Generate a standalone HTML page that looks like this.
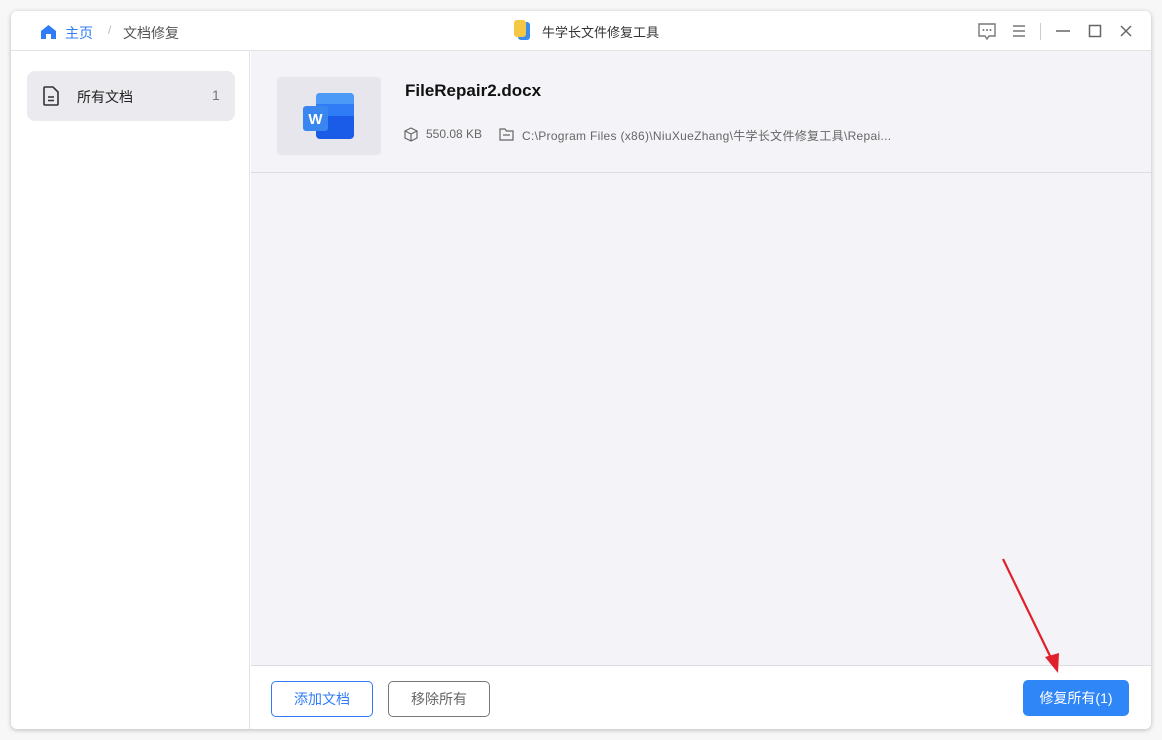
<!DOCTYPE html>
<html><head><meta charset="utf-8"><style>
*{margin:0;padding:0;box-sizing:border-box}
body{width:1162px;height:740px;background:#f7f7f7;font-family:"Liberation Sans","Noto Sans CJK SC",sans-serif;position:relative;overflow:hidden}
.win{position:absolute;left:11px;top:11px;width:1140px;height:718px;background:#fff;border-radius:6px;box-shadow:0 1px 5px rgba(0,0,0,.25);overflow:hidden}
.title{position:absolute;left:0;top:0;width:100%;height:40px;border-bottom:1px solid #e3e3e6}
.side{position:absolute;left:0;top:40px;width:239px;bottom:0;border-right:1px solid #e3e3e6;background:#fff}
.main{position:absolute;left:240px;top:40px;right:0;height:614px;background:#f4f4f8}
.foot{position:absolute;left:240px;top:654px;right:0;bottom:0;border-top:1px solid #dcdce0;background:#fff}
.t{position:absolute;white-space:nowrap}
</style></head><body>
<div class="win">
 <div class="title">
  <svg class="t" style="left:29px;top:13px" width="17" height="16" viewBox="0 0 17 16"><path d="M8.5 1L1 7v8h5v-5h5v5h5V7z" fill="#2f7cf6"/></svg>
  <span class="t" style="left:54px;top:12px;font-size:14px;color:#2f7cf6">主页</span>
  <span class="t" style="left:97px;top:12px;font-size:12px;color:#bbb">/</span>
  <span class="t" style="left:112px;top:12px;font-size:14px;color:#555">文档修复</span>
  <svg class="t" style="left:502px;top:8px" width="18" height="22" viewBox="0 0 18 22"><rect x="5" y="3" width="12" height="18" rx="3" fill="#3a8cf0"/><rect x="1" y="1" width="12" height="17" rx="3" fill="#f6c745"/></svg>
  <span class="t" style="left:531px;top:11px;font-size:13px;color:#333">牛学长文件修复工具</span>
  <svg class="t" style="left:966px;top:11px" width="20" height="19" viewBox="0 0 20 19"><path d="M2 2h16v12h-6l-2 3-2-3H2z" fill="none" stroke="#777" stroke-width="1.4"/><circle cx="6.5" cy="8" r="1" fill="#777"/><circle cx="10" cy="8" r="1" fill="#777"/><circle cx="13.5" cy="8" r="1" fill="#777"/></svg>
  <svg class="t" style="left:1000px;top:13px" width="16" height="14" viewBox="0 0 16 14"><path d="M2 2h12M2 7h12M2 12h12" stroke="#777" stroke-width="1.4"/></svg>
  <div class="t" style="left:1029px;top:12px;width:1px;height:17px;background:#ccc"></div>
  <svg class="t" style="left:1044px;top:13px" width="16" height="14"><path d="M1 7h14" stroke="#666" stroke-width="1.6"/></svg>
  <svg class="t" style="left:1077px;top:13px" width="14" height="14"><rect x="1.5" y="1.5" width="11" height="11" fill="none" stroke="#666" stroke-width="1.5"/></svg>
  <svg class="t" style="left:1108px;top:13px" width="14" height="14"><path d="M2 2l10 10M12 2L2 12" stroke="#666" stroke-width="1.5"/></svg>
 </div>
 <div class="side">
  <div class="t" style="left:16px;top:20px;width:208px;height:50px;background:#ebebef;border-radius:8px"></div>
  <svg class="t" style="left:32px;top:35px" width="16" height="20" viewBox="0 0 16 20"><path d="M2 1h8l5 5v12a1 1 0 0 1-1 1H2a1 1 0 0 1-1-1V2a1 1 0 0 1 1-1z" fill="none" stroke="#333" stroke-width="1.6"/><path d="M5 11h6M5 14.5h6" stroke="#333" stroke-width="1.6"/></svg>
  <span class="t" style="left:66px;top:36px;font-size:14px;color:#222">所有文档</span>
  <span class="t" style="left:201px;top:36px;font-size:14px;color:#777">1</span>
 </div>
 <div class="main">
  <div class="t" style="left:26px;top:26px;width:104px;height:78px;background:#e6e6ec;border-radius:4px"></div>
  <svg class="t" style="left:51px;top:41px" width="54" height="48" viewBox="0 0 54 48"><rect x="14" y="1" width="38" height="46" rx="4" fill="#1a5ce8"/><rect x="14" y="1" width="38" height="14" rx="4" fill="#4b9af7"/><rect x="14" y="12" width="38" height="12" fill="#2f7cf6"/><rect x="1" y="14" width="25" height="25" rx="3" fill="#3a86f0"/><text x="13.5" y="32" text-anchor="middle" font-family="Liberation Sans" font-weight="bold" font-size="15" fill="#fff">W</text></svg>
  <span class="t" style="left:154px;top:30px;font-size:17px;font-weight:bold;color:#111">FileRepair2.docx</span>
  <svg class="t" style="left:153px;top:76px" width="14" height="15" viewBox="0 0 14 15"><path d="M7 1l6 3v7l-6 3-6-3V4z M1 4l6 3 6-3 M7 7v7" fill="none" stroke="#666" stroke-width="1.2"/></svg>
  <span class="t" style="left:175px;top:76px;font-size:12px;color:#666">550.08 KB</span>
  <svg class="t" style="left:248px;top:77px" width="15" height="13" viewBox="0 0 15 13"><path d="M1 1h5l1.5 2H14v9H1z M4 7h7" fill="none" stroke="#666" stroke-width="1.2"/></svg>
  <span class="t" style="left:271px;top:76px;font-size:12px;letter-spacing:0.3px;color:#666">C:\Program Files (x86)\NiuXueZhang\牛学长文件修复工具\Repai...</span>
  <div class="t" style="left:0;top:121px;width:100%;height:1px;background:#dcdce0"></div>
 </div>
 <div class="foot">
  <div class="t" style="left:20px;top:15px;width:102px;height:36px;border:1px solid #2f7cf6;border-radius:5px;color:#2f7cf6;font-size:14px;text-align:center;line-height:34px">添加文档</div>
  <div class="t" style="left:137px;top:15px;width:102px;height:36px;border:1px solid #777;border-radius:5px;color:#666;font-size:14px;text-align:center;line-height:34px">移除所有</div>
  <div class="t" style="left:772px;top:14px;width:106px;height:36px;background:#2f86f6;border-radius:5px;color:#fff;font-size:14px;text-align:center;line-height:36px">修复所有(1)</div>
 </div>
</div>
<svg style="position:absolute;left:0;top:0" width="1162" height="740"><path d="M1003 559L1052 660" stroke="#e0202a" stroke-width="2.2"/><path d="M1045 657l13 16 1-20z" fill="#e0202a"/></svg>
</body></html>
